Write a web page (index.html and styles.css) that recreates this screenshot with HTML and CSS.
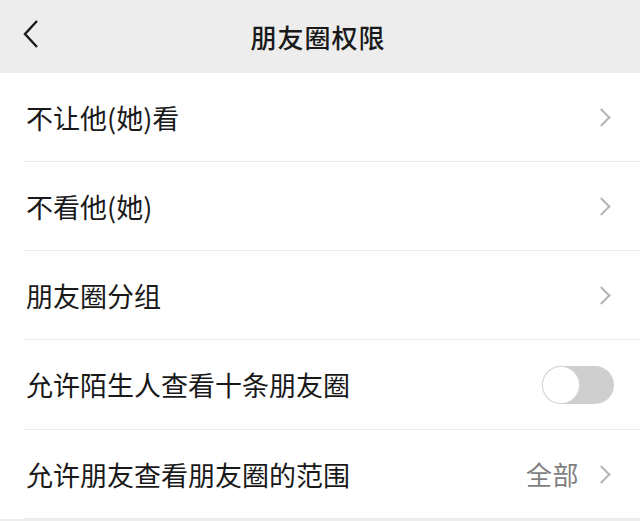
FILE: index.html
```html
<!DOCTYPE html>
<html lang="zh">
<head>
<meta charset="utf-8">
<link rel="stylesheet" href="styles.css">
</head>
<body>
<div class="page">
  <header class="bar">
    <span class="back">
      <svg width="16" height="28" viewBox="0 0 16 28"><path d="M14 1 L2 14 L14 27" fill="none" stroke="#1a1a1a" stroke-width="2.4" stroke-linejoin="miter"/></svg>
    </span>
    <h1 class="title">朋友圈权限</h1>
  </header>
  <ul class="list">
    <li class="row"><span class="label">不让他(她)看</span><span class="chev"></span></li>
    <li class="row"><span class="label">不看他(她)</span><span class="chev"></span></li>
    <li class="row"><span class="label">朋友圈分组</span><span class="chev"></span></li>
    <li class="row"><span class="label">允许陌生人查看十条朋友圈</span><span class="switch"><span class="knob"></span></span></li>
    <li class="row"><span class="label">允许朋友查看朋友圈的范围</span><span class="value">全部</span><span class="chev"></span></li>
  </ul>
</div>
</body>
</html>
```
FILE: styles.css
```css
* { box-sizing: border-box; }
html, body { margin: 0; padding: 0; background: #ededed; }
body { font-family: "Noto Sans CJK SC", "Noto Sans", sans-serif; color: #191919; }
.page { width: 640px; height: 521px; overflow: hidden; background: #ededed; }
.bar { height: 73px; position: relative; display: flex; align-items: center; justify-content: center; background: #ededed; }
.back { position: absolute; left: 23px; top: 20px; display: block; width: 16px; height: 28px; }
.back svg { display: block; }
.title { margin: 0 0 0 -4px; font-size: 26px; font-weight: 500; letter-spacing: 1px; color: #1a1a1a; line-height: 1; }
.list { list-style: none; margin: 0; padding: 0 0 0 24px; background: #fff; }
.row { height: 89px; display: flex; align-items: center; padding-right: 28px; border-bottom: 1px solid #ececec; }
.row:nth-child(4) { height: 90px; }
.label { flex: 1; font-size: 27px; padding-left: 2px; color: #191919; line-height: 1; }
.value { font-size: 26px; color: #7f7f7f; margin-right: 16px; line-height: 1; letter-spacing: 0.5px; }
.chev { width: 13px; height: 13px; border-top: 2px solid #b5b5b5; border-right: 2px solid #b5b5b5; transform: rotate(45deg); margin-right: 4px; }
.switch { width: 72px; height: 38px; border-radius: 19px; background: #cfcfcf; position: relative; margin-right: -2px; }
.knob { position: absolute; left: 1px; top: 1px; width: 36px; height: 36px; border-radius: 50%; background: #fff; box-shadow: 0 0 0 1px #d6d6d6; }
```
